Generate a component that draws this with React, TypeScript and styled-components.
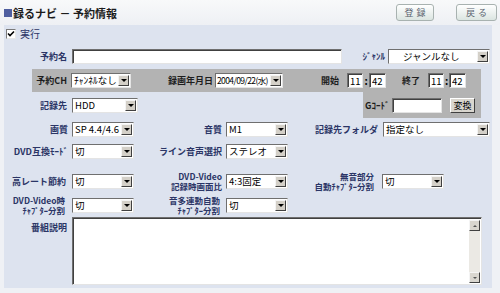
import React from "react";
import styled, { createGlobalStyle } from "styled-components";

const Global = createGlobalStyle`
  html, body { margin: 0; padding: 0; }
  body {
    background: #eff1f5;
    font-family: "Noto Sans CJK JP", "Noto Sans", sans-serif;
  }
`;

const Page = styled.div`
  width: 500px;
  height: 293px;
  overflow: hidden;
  background: #eff1f5;
`;

const Header = styled.div`
  height: 25px;
  box-sizing: border-box;
  padding: 0 3px 0 4px;
  display: flex;
  align-items: center;
  justify-content: space-between;
  background: linear-gradient(#f8f9fa, #eef0f4);
`;

const Title = styled.h1`
  margin: 0;
  display: flex;
  align-items: center;
  gap: 1px;
  font-size: 11px;
  font-weight: bold;
  color: #1c1c1c;
`;

const Mark = styled.span`
  display: inline-block;
  width: 8px;
  height: 8px;
  background: #4f5e9f;
`;

const HeadButtons = styled.div`
  display: flex;
  gap: 22px;
`;

const HeadButton = styled.button<{ $w: number }>`
  width: ${(p) => p.$w}px;
  height: 17px;
  padding: 0 0 0 3px;
  border: 1px solid #a8b2b0;
  border-radius: 3px;
  background: linear-gradient(#ffffff, #dbe5e1);
  font-family: inherit;
  font-size: 9px;
  color: #5a6470;
  letter-spacing: 3px;
`;

const Panel = styled.div`
  margin-left: 4px;
  width: 488px;
  height: 263px;
  background: #dde3ef;
  display: flex;
  flex-direction: column;
`;

const Row = styled.div<{ $h: number; $mt?: number; $top?: boolean }>`
  display: flex;
  align-items: ${(p) => (p.$top ? "flex-start" : "center")};
  height: ${(p) => p.$h}px;
  margin-top: ${(p) => p.$mt ?? 0}px;
  flex: none;
`;

const CheckRow = styled.div`
  height: 19px;
  padding: 4px 0 0 2px;
  box-sizing: border-box;
  display: flex;
  align-items: flex-start;
  gap: 4px;
  font-size: 10px;
  line-height: 10px;
  color: #2b3566;
  flex: none;
`;

const CheckBox = styled.span`
  width: 10px;
  height: 10px;
  box-sizing: border-box;
  border: 1px solid;
  border-color: #7a7a7a #e8e8e8 #e8e8e8 #7a7a7a;
  background: #fff;
  display: flex;
  align-items: center;
  justify-content: center;
`;

const Label = styled.div<{ $w: number; $pr?: number; $dark?: boolean; $pt?: number }>`
  width: ${(p) => p.$w}px;
  flex: none;
  box-sizing: border-box;
  padding-right: ${(p) => p.$pr ?? 4}px;
  padding-top: ${(p) => p.$pt ?? 0}px;
  text-align: right;
  font-size: 9px;
  line-height: 11px;
  font-weight: bold;
  color: ${(p) => (p.$dark ? "#1e1e1e" : "#2b3566")};
  white-space: nowrap;
`;

const Line = styled.span`
  display: block;
  font-size: 8.5px;
  line-height: 10.5px;
`;

const SelectBox = styled.div<{ $w: number }>`
  width: ${(p) => p.$w}px;
  height: 15px;
  flex: none;
  box-sizing: border-box;
  border: 1px solid;
  border-color: #6f6f6f #e4e4e4 #e4e4e4 #6f6f6f;
  background: #fff;
  display: flex;
  align-items: center;
`;

const SelectText = styled.span<{ $pl?: number; $tight?: boolean }>`
  flex: 1;
  min-width: 0;
  padding-left: ${(p) => p.$pl ?? 2}px;
  font-size: ${(p) => (p.$tight ? 8.5 : 9.5)}px;
  letter-spacing: ${(p) => (p.$tight ? "-0.6px" : "0")};
  line-height: 13px;
  color: #000;
  white-space: nowrap;
`;

const Arrow = styled.span`
  width: 11px;
  height: 11px;
  margin-right: 1px;
  flex: none;
  box-sizing: border-box;
  background: #d4d0c8;
  border: 1px solid;
  border-color: #f4f4f4 #404040 #404040 #f4f4f4;
  display: flex;
  align-items: center;
  justify-content: center;
  &::after {
    content: "";
    border-left: 3px solid transparent;
    border-right: 3px solid transparent;
    border-top: 3px solid #000;
  }
`;

const TextBox = styled.input<{ $w: number }>`
  width: ${(p) => p.$w}px;
  height: 15px;
  flex: none;
  box-sizing: border-box;
  margin: 0;
  padding: 0 0 0 2px;
  border: 1px solid;
  border-color: #6f6f6f #e4e4e4 #e4e4e4 #6f6f6f;
  box-shadow: inset 1px 1px 0 #404040;
  background: #fff;
  font-family: inherit;
  font-size: 9.5px;
  color: #000;
  outline: none;
`;

const Colon = styled.span<{ $w: number }>`
  width: ${(p) => p.$w}px;
  flex: none;
  text-align: center;
  font-size: 10px;
  font-weight: bold;
  color: #000;
`;

const Band = styled.div`
  margin-left: 28px;
  width: 449px;
  height: 23px;
  flex: none;
  background: #b3b3b3;
  display: flex;
  align-items: center;
`;

const LeftCluster = styled.div`
  width: 359px;
  flex: none;
  display: flex;
  align-items: center;
`;

const GBox = styled.div`
  width: 118px;
  height: 26px;
  flex: none;
  background: #b3b3b3;
  display: flex;
  align-items: center;
  padding-left: 2px;
  box-sizing: border-box;
  align-self: flex-start;
`;

const GLabel = styled.span`
  width: 27px;
  flex: none;
  font-size: 9px;
  font-weight: bold;
  color: #1e1e1e;
`;

const SmallButton = styled.button`
  width: 25px;
  height: 15px;
  margin-left: 8px;
  padding: 0;
  box-sizing: border-box;
  border: 1px solid;
  border-color: #ffffff #404040 #404040 #ffffff;
  background: #d9d6cf;
  font-family: inherit;
  font-size: 9px;
  color: #000;
`;

const Memo = styled.div`
  width: 410px;
  height: 68px;
  flex: none;
  box-sizing: border-box;
  border: 1px solid;
  border-color: #6f6f6f #e4e4e4 #e4e4e4 #6f6f6f;
  box-shadow: inset 1px 1px 0 #404040;
  background: #fff;
  display: flex;
  justify-content: flex-end;
  padding: 2px 1px 1px 2px;
`;

const ScrollBar = styled.div`
  width: 11px;
  display: flex;
  flex-direction: column;
  justify-content: space-between;
  background: #ebe9e4;
`;

const ScrollButton = styled.span<{ $down?: boolean }>`
  width: 11px;
  height: 11px;
  box-sizing: border-box;
  background: #d9d6cf;
  border: 1px solid;
  border-color: #f4f4f4 #404040 #404040 #f4f4f4;
  display: flex;
  align-items: center;
  justify-content: center;
  &::after {
    content: "";
    border-left: 2px solid transparent;
    border-right: 2px solid transparent;
    ${(p) =>
      p.$down ? "border-top: 2px solid #555;" : "border-bottom: 2px solid #555;"}
  }
`;

const Select = ({
  w,
  text,
  pl,
  tight,
}: {
  w: number;
  text: string;
  pl?: number;
  tight?: boolean;
}) => (
  <SelectBox $w={w}>
    <SelectText $pl={pl} $tight={tight}>
      {text}
    </SelectText>
    <Arrow />
  </SelectBox>
);

export default function App() {
  return (
    <Page>
      <Global />
      <Header>
        <Title>
          <Mark />
          録るナビ － 予約情報
        </Title>
        <HeadButtons>
          <HeadButton $w={38}>登録</HeadButton>
          <HeadButton $w={41}>戻る</HeadButton>
        </HeadButtons>
      </Header>
      <Panel>
        <CheckRow>
          <CheckBox>
            <svg width="8" height="8" viewBox="0 0 8 8">
              <path d="M1 3.5 L3 5.5 L7 1.5" stroke="#000" strokeWidth="1.6" fill="none" />
            </svg>
          </CheckBox>
          実行
        </CheckRow>

        <Row $h={25}>
          <Label $w={68} $pr={5}>予約名</Label>
          <TextBox $w={270} defaultValue="" />
          <Label $w={46} $pr={3}>ｼﾞｬﾝﾙ</Label>
          <Select w={102} text="ジャンルなし" pl={14} />
        </Row>

        <Band>
          <Label $w={39} $pr={4} $dark>予約CH</Label>
          <Select w={60} text="ﾁｬﾝﾈﾙなし" />
          <Label $w={84} $pr={2} $dark>録画年月日</Label>
          <Select w={68} text="2004/09/22(水)" pl={1} tight />
          <Label $w={64} $pr={8} $dark>開始</Label>
          <TextBox $w={16} defaultValue="11" />
          <Colon $w={6}>:</Colon>
          <TextBox $w={17} defaultValue="42" />
          <Label $w={42} $pr={8} $dark>終了</Label>
          <TextBox $w={16} defaultValue="11" />
          <Colon $w={5}>:</Colon>
          <TextBox $w={17} defaultValue="42" />
        </Band>

        <Row $h={26}>
          <LeftCluster>
            <Label $w={68} $pr={5}>記録先</Label>
            <Select w={66} text="HDD" />
          </LeftCluster>
          <GBox>
            <GLabel>Gｺｰﾄﾞ</GLabel>
            <TextBox $w={50} defaultValue="" />
            <SmallButton>変換</SmallButton>
          </GBox>
        </Row>

        <Row $h={22}>
          <Label $w={68}>画質</Label>
          <Select w={62} text="SP 4.4/4.6" />
          <Label $w={92}>音質</Label>
          <Select w={62} text="M1" />
          <Label $w={95} $pr={5}>記録先フォルダ</Label>
          <Select w={107} text="指定なし" />
        </Row>

        <Row $h={22}>
          <Label $w={68}>DVD互換ﾓｰﾄﾞ</Label>
          <Select w={62} text="切" />
          <Label $w={92}>ライン音声選択</Label>
          <Select w={62} text="ステレオ" />
        </Row>

        <Row $h={24} $mt={7}>
          <Label $w={68} $pr={6}>高レート節約</Label>
          <Select w={62} text="切" />
          <Label $w={92}>
            <Line>DVD-Video</Line>
            <Line>記録時画面比</Line>
          </Label>
          <Select w={62} text="4:3固定" />
          <Label $w={94} $pr={8}>
            <Line>無音部分</Line>
            <Line>自動ﾁｬﾌﾟﾀｰ分割</Line>
          </Label>
          <Select w={62} text="切" />
        </Row>

        <Row $h={24}>
          <Label $w={68} $pr={7}>
            <Line>DVD-Video時</Line>
            <Line>ﾁｬﾌﾟﾀｰ分割</Line>
          </Label>
          <Select w={62} text="切" />
          <Label $w={92} $pr={6}>
            <Line>音多連動自動</Line>
            <Line>ﾁｬﾌﾟﾀｰ分割</Line>
          </Label>
          <Select w={62} text="切" />
        </Row>

        <Row $h={70} $top>
          <Label $w={68} $pr={5} $pt={5}>番組説明</Label>
          <Memo>
            <ScrollBar>
              <ScrollButton />
              <ScrollButton $down />
            </ScrollBar>
          </Memo>
        </Row>
      </Panel>
    </Page>
  );
}
